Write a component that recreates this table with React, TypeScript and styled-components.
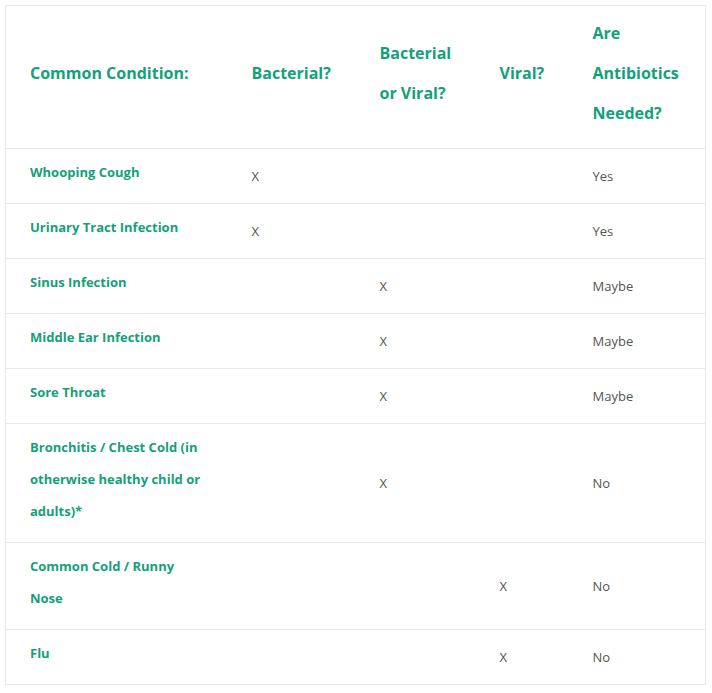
import React from "react";
import styled, { createGlobalStyle } from "styled-components";

const Global = createGlobalStyle`
  html, body { margin: 0; padding: 0; background: #fff; }
  body { font-family: "Open Sans", "Noto Sans", sans-serif; }
`;

const Page = styled.div`
  padding: 5px 7px 5px 5px;
`;

const Table = styled.table`
  width: 700px;
  border-collapse: collapse;
  border: 1px solid #e9e9e9;
  table-layout: fixed;
`;

const Row = styled.tr`
  border-bottom: 1px solid #e9e9e9;
`;

const HeadCell = styled.th`
  text-align: left;
  vertical-align: middle;
  padding: 7px 10px 15px 24px;
  font-size: 16px;
  line-height: 40px;
  font-weight: 700;
  color: #14a07b;
`;

const NameCell = styled.td`
  vertical-align: top;
  padding: 7px 24px 15px 24px;
  font-size: 13px;
  line-height: 32px;
  font-weight: 700;
  color: #14a07b;
`;

const DataCell = styled.td`
  vertical-align: middle;
  padding: 8px 10px 8px 24px;
  font-size: 13px;
  line-height: 20px;
  color: #555;
`;

const rows: [string, string, string, string, string][] = [
  ["Whooping Cough", "X", "", "", "Yes"],
  ["Urinary Tract Infection", "X", "", "", "Yes"],
  ["Sinus Infection", "", "X", "", "Maybe"],
  ["Middle Ear Infection", "", "X", "", "Maybe"],
  ["Sore Throat", "", "X", "", "Maybe"],
  ["Bronchitis / Chest Cold (in otherwise healthy child or adults)*", "", "X", "", "No"],
  ["Common Cold / Runny Nose", "", "", "X", "No"],
  ["Flu", "", "", "X", "No"],
];

export default function App() {
  return (
    <Page>
      <Global />
      <Table>
        <colgroup>
          <col style={{ width: 222 }} />
          <col style={{ width: 128 }} />
          <col style={{ width: 120 }} />
          <col style={{ width: 93 }} />
          <col style={{ width: 137 }} />
        </colgroup>
        <thead>
          <Row>
            <HeadCell>Common Condition:</HeadCell>
            <HeadCell>Bacterial?</HeadCell>
            <HeadCell>Bacterial or Viral?</HeadCell>
            <HeadCell>Viral?</HeadCell>
            <HeadCell>Are Antibiotics Needed?</HeadCell>
          </Row>
        </thead>
        <tbody>
          {rows.map((r) => (
            <Row key={r[0]}>
              <NameCell>{r[0]}</NameCell>
              <DataCell>{r[1]}</DataCell>
              <DataCell>{r[2]}</DataCell>
              <DataCell>{r[3]}</DataCell>
              <DataCell>{r[4]}</DataCell>
            </Row>
          ))}
        </tbody>
      </Table>
    </Page>
  );
}
